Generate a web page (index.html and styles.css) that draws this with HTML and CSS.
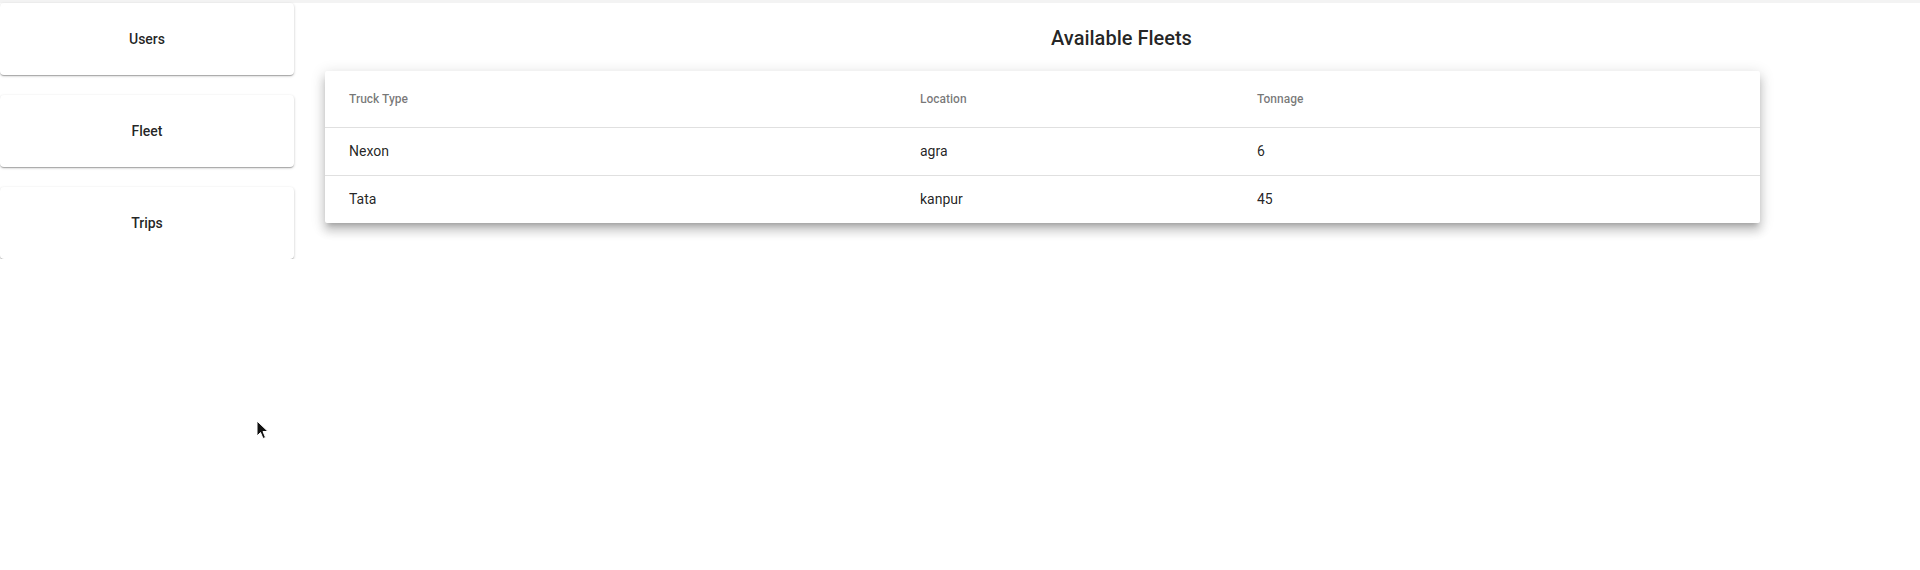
FILE: index.html
```html
<!DOCTYPE html>
<html>
<head>
<meta charset="utf-8">
<link rel="stylesheet" href="styles.css">
</head>
<body>
<div class="topbar"></div>
<div class="layout">
  <nav class="sidebar">
    <div class="nav-card">Users</div>
    <div class="nav-card">Fleet</div>
    <div class="nav-card">Trips</div>
  </nav>
  <main class="main">
    <h2 class="title">Available Fleets</h2>
    <div class="paper">
      <table class="table">
        <colgroup>
          <col class="c1"><col class="c2"><col class="c3">
        </colgroup>
        <thead>
          <tr><th>Truck Type</th><th>Location</th><th>Tonnage</th></tr>
        </thead>
        <tbody>
          <tr><td>Nexon</td><td>agra</td><td>6</td></tr>
          <tr><td>Tata</td><td>kanpur</td><td>45</td></tr>
        </tbody>
      </table>
    </div>
  </main>
</div>
<svg class="cursor" width="13" height="20" viewBox="0 0 13 20">
  <path d="M1 1 L1 16 L4.5 12.5 L7 18.5 L9.5 17.5 L7 11.5 L12 11.5 Z" fill="#111" stroke="#fff" stroke-width="1"/>
</svg>
</body>
</html>
```
FILE: styles.css
```css
html, body {
  margin: 0;
  padding: 0;
  background: #fff;
  font-family: Roboto, "Liberation Sans", sans-serif;
  color: rgba(0, 0, 0, 0.87);
}
.topbar {
  height: 3px;
  background: #f3f3f3;
}
.layout {
  display: flex;
  align-items: flex-start;
}
.sidebar {
  width: 294px;
  flex: none;
  display: flex;
  flex-direction: column;
  gap: 20px;
}
.nav-card {
  height: 72px;
  display: flex;
  align-items: center;
  justify-content: center;
  background: #fff;
  border-radius: 4px;
  font-size: 14px;
  font-weight: 500;
  box-shadow: 0 1px 3px 0 rgba(0,0,0,0.2), 0 1px 1px 0 rgba(0,0,0,0.14), 0 2px 1px -1px rgba(0,0,0,0.12);
}
.main {
  flex: 1;
  padding-left: 31px;
}
.title {
  margin: 0 0 0 -2px;
  padding-top: 20px;
  height: 68px;
  box-sizing: border-box;
  text-align: center;
  font-size: 20px;
  font-weight: 500;
  line-height: 30px;
  color: rgba(0,0,0,0.87);
}
.paper {
  width: 1435px;
  background: #fff;
  border-radius: 2px;
  box-shadow: 0 5px 5px -3px rgba(0,0,0,0.2), 0 8px 10px 1px rgba(0,0,0,0.14), 0 3px 14px 2px rgba(0,0,0,0.12);
}
.table {
  width: 100%;
  border-collapse: collapse;
  table-layout: fixed;
}
.c1 { width: 571px; }
.c2 { width: 337px; }
.c3 { width: 527px; }
.table th {
  height: 56px;
  padding: 0 24px;
  text-align: left;
  font-size: 12px;
  font-weight: 500;
  color: rgba(0,0,0,0.54);
  border-bottom: 1px solid #e0e0e0;
  box-sizing: border-box;
}
.table td {
  height: 48px;
  padding: 0 24px;
  text-align: left;
  font-size: 14px;
  font-weight: 400;
  color: rgba(0,0,0,0.87);
  border-bottom: 1px solid #e0e0e0;
  box-sizing: border-box;
}
.table tbody tr:last-child td {
  border-bottom: none;
}
.cursor {
  position: absolute;
  left: 256px;
  top: 420px;
}
```
